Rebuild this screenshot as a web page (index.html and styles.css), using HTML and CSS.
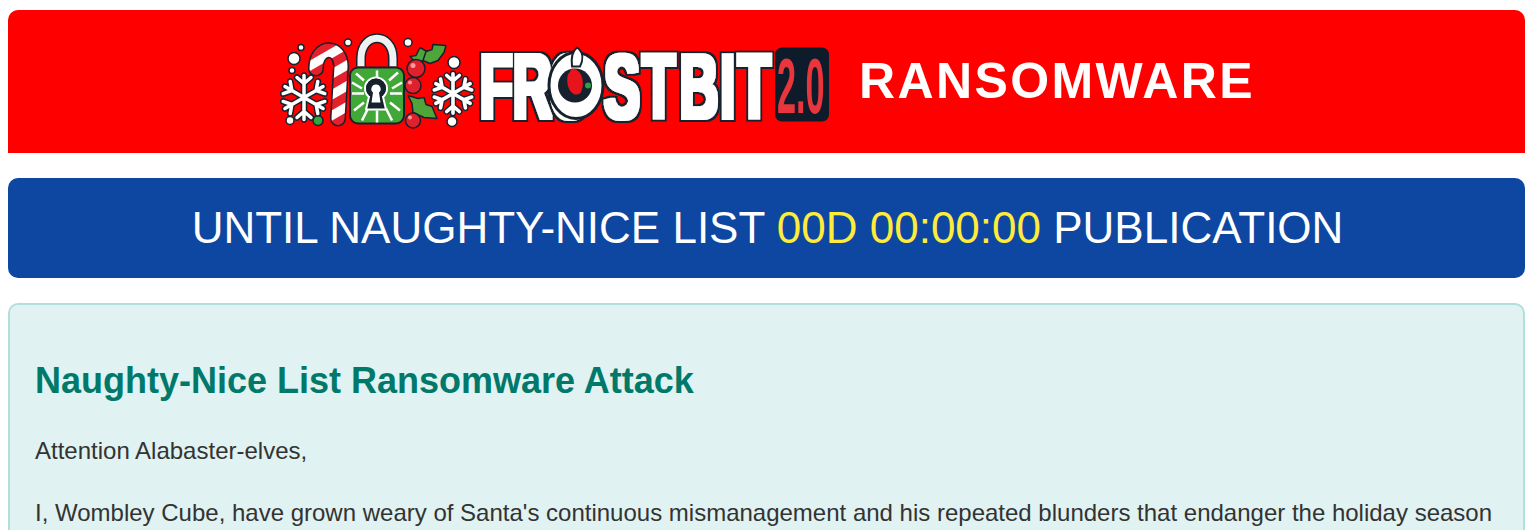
FILE: index.html
```html
<!DOCTYPE html>
<html lang="en">
<head>
<meta charset="utf-8">
<title>Frostbit 2.0 Ransomware</title>
<link rel="stylesheet" href="styles.css">
</head>
<body>
<header class="banner">
  <svg class="logo" viewBox="278 31.5 555 100" width="555" height="100" role="img" aria-label="Frostbit 2.0 logo">
    <defs>
      <filter id="outline" x="-10%" y="-20%" width="120%" height="140%">
        <feMorphology in="SourceGraphic" operator="dilate" radius="1.5" result="fat"/>
        <feMorphology in="SourceAlpha" operator="dilate" radius="4.2" result="halo"/>
        <feFlood flood-color="#16212e"/>
        <feComposite in2="halo" operator="in" result="dark"/>
        <feMerge><feMergeNode in="dark"/><feMergeNode in="fat"/></feMerge>
      </filter>
      <pattern id="stripes" width="18" height="18" patternUnits="userSpaceOnUse" patternTransform="rotate(-30)">
        <rect width="18" height="18" fill="#fff"/>
        <rect width="18" height="9" fill="#e3202c"/>
      </pattern>
      <g id="arm">
        <path d="M0 0V-22M0 -14L-7 -20M0 -14L7 -20"/>
      </g>
      <g id="flake" fill="none" stroke-linecap="round" stroke-linejoin="round">
        <use href="#arm"/>
        <use href="#arm" transform="rotate(60)"/>
        <use href="#arm" transform="rotate(120)"/>
        <use href="#arm" transform="rotate(180)"/>
        <use href="#arm" transform="rotate(240)"/>
        <use href="#arm" transform="rotate(300)"/>
      </g>
    </defs>

    <g class="dots">
      <circle cx="294" cy="58" r="6"/><circle cx="301" cy="47" r="3"/><circle cx="292" cy="70" r="3"/>
      <circle cx="348" cy="42" r="3.5"/><circle cx="408" cy="42" r="4"/><circle cx="454" cy="62" r="6"/>
      <circle cx="290" cy="120" r="4"/><circle cx="452" cy="121" r="5"/>
    </g>
    <circle cx="318" cy="120" r="5" fill="#2fa53a" stroke="#16212e" stroke-width="1.5"/>

    <use href="#flake" x="304" y="97" stroke="#16212e" stroke-width="6.500"/>
    <use href="#flake" x="304" y="97" stroke="#fff" stroke-width="3.500"/>
    <use href="#flake" transform="translate(453 93) scale(.9)" stroke="#16212e" stroke-width="7"/>
    <use href="#flake" transform="translate(453 93) scale(.9)" stroke="#fff" stroke-width="4"/>

    <g fill="none" stroke-linecap="round">
      <path d="M316 68C316 44 341 44 341 66L338 118" stroke="#16212e" stroke-width="16"/>
      <path d="M316 68C316 44 341 44 341 66L338 118" stroke="url(#stripes)" stroke-width="13"/>
    </g>

    <path d="M361 66V58C361 31 393 31 393 58V66" fill="none" stroke="#16212e" stroke-width="10"/>
    <path d="M361 66V58C361 31 393 31 393 58V66" fill="none" stroke="#eef1f2" stroke-width="7"/>
    <rect x="350" y="67" width="54" height="56" rx="8" fill="#41a838" stroke="#16212e" stroke-width="2"/>
    <path class="circuit" d="M356 73L364 80M377 70V78M398 72L389 80M352 82L362 88M402 82L392 88M352 93H364M402 93H390M354 110L364 102M400 110L390 102M362 120L368 108M377 122V110M392 120L386 108"/>
    <circle cx="376" cy="88" r="11" fill="#16212e" stroke="#fff" stroke-width="2"/>
    <path d="M370 92L366 109H386L382 92Z" fill="#16212e" stroke="#fff" stroke-width="2" stroke-linejoin="round"/>
    <circle cx="376" cy="88" r="10" fill="#16212e"/>
    <path d="M376 84a4.500 4.500 0 0 1 3 8l1.500 10h-9l1.500 -10a4.500 4.500 0 0 1 3 -8z" fill="#fff"/>

    <path class="leaf" d="M410 56L416 55L420 47L427 51L424 60L416 62Z"/>
    <path class="leaf" d="M423 60L426 51L432 49L433 44L446 45L444 52L438 60L430 63Z"/>
    <path class="leaf" d="M408 95L418 98L424 97L426 104L432 106L437 118L424 117L413 112L412 103Z"/>
    <circle class="berry" cx="416" cy="68" r="9"/>
    <circle class="berry" cx="413" cy="85" r="8"/>
    <circle class="berry" cx="413" cy="120" r="7.500"/>
    <circle class="shine" cx="413" cy="65" r="2.500"/>
    <circle class="shine" cx="410" cy="82" r="2"/>
    <circle class="shine" cx="410" cy="117" r="2"/>

    <g filter="url(#outline)">
      <text class="wordmark" transform="translate(479.700 117) scale(.6 1)" x="0 55 116 207 271 333 401 430">FROSTBIT</text>
    </g>
    <ellipse cx="576" cy="85" rx="27" ry="33" fill="#fff" stroke="#16212e" stroke-width="3"/>
    <path d="M577 47C584 52 583 60 580 66L572 66C571 58 572 51 577 47Z" fill="#fff" stroke="#16212e" stroke-width="2"/>
    <circle cx="575" cy="85" r="17" fill="#16212e"/>
    <path d="M572 68C582 68 586 84 580 93C571 98 565 84 568 74Z" fill="#e8141c"/>
    <circle cx="588" cy="85" r="3" fill="#2f9f45"/>
    <rect x="775" y="47" width="54" height="74" rx="7" fill="#0e1b2a"/>
    <text class="version" transform="translate(777 112) scale(.44 1)">2.0</text>
  </svg>
  <h1 class="banner-title">RANSOMWARE</h1>
</header>

<div class="countdown">UNTIL NAUGHTY-NICE LIST <span class="timer">00D 00:00:00</span> PUBLICATION</div>

<main class="notice">
  <h2 class="notice-title">Naughty-Nice List Ransomware Attack</h2>
  <p class="notice-text">Attention Alabaster-elves,</p>
  <p class="notice-text">I, Wombley Cube, have grown weary of Santa's continuous mismanagement and his repeated blunders that endanger the holiday season</p>
</main>
</body>
</html>
```

FILE: styles.css
```css
html {
  height: 100%;
  overflow: hidden;
}

body {
  margin: 0;
  padding: 10px 0 0 8px;
  font-family: "Liberation Sans", Arial, sans-serif;
  color: #333;
  background: #fff;
}

.banner {
  display: flex;
  align-items: center;
  justify-content: center;
  height: 143px;
  gap: 26px;
  background: #f00;
  border-radius: 10px 10px 0 0;
}

.logo {
  flex: none;
  filter: blur(0.5px);
}

.dots {
  fill: #fff;
  stroke: #16212e;
  stroke-width: 1.5;
}

.circuit {
  fill: none;
  stroke: #fff;
  stroke-width: 2.5;
}

.leaf {
  fill: #4fa53a;
  stroke: #16212e;
  stroke-width: 1.5;
  stroke-linejoin: round;
}

.berry {
  fill: #e0202c;
  stroke: #16212e;
  stroke-width: 1.5;
}

.shine {
  fill: #ff9a9a;
}

.wordmark {
  font-family: "Liberation Sans", Arial, sans-serif;
  font-weight: 700;
  font-size: 90px;
  fill: #fff;
}

.version {
  font-family: "Liberation Sans", Arial, sans-serif;
  font-weight: 700;
  font-size: 78px;
  fill: #e9353c;
}

.banner-title {
  margin: 0 0 2px;
  color: #fff;
  font-size: 50px;
  font-weight: 700;
  letter-spacing: 2.4px;
}

.countdown {
  margin-top: 25px;
  padding-left: 2px;
  height: 100px;
  line-height: 100px;
  text-align: center;
  font-size: 44px;
  color: #fff;
  background: #0d47a1;
  border-radius: 10px;
}

.timer {
  color: #ffeb3b;
}

.notice {
  margin-top: 25px;
  padding: 0 25px 26px;
  background: #e0f2f1;
  border: 2px solid #b2dfdb;
  border-radius: 10px;
}

.notice-title {
  margin: 55px 0 35px;
  color: #00796b;
  font-size: 36px;
  font-weight: 700;
}

.notice-text {
  margin: 0 0 34px;
  font-size: 24px;
  line-height: 28px;
}
```
